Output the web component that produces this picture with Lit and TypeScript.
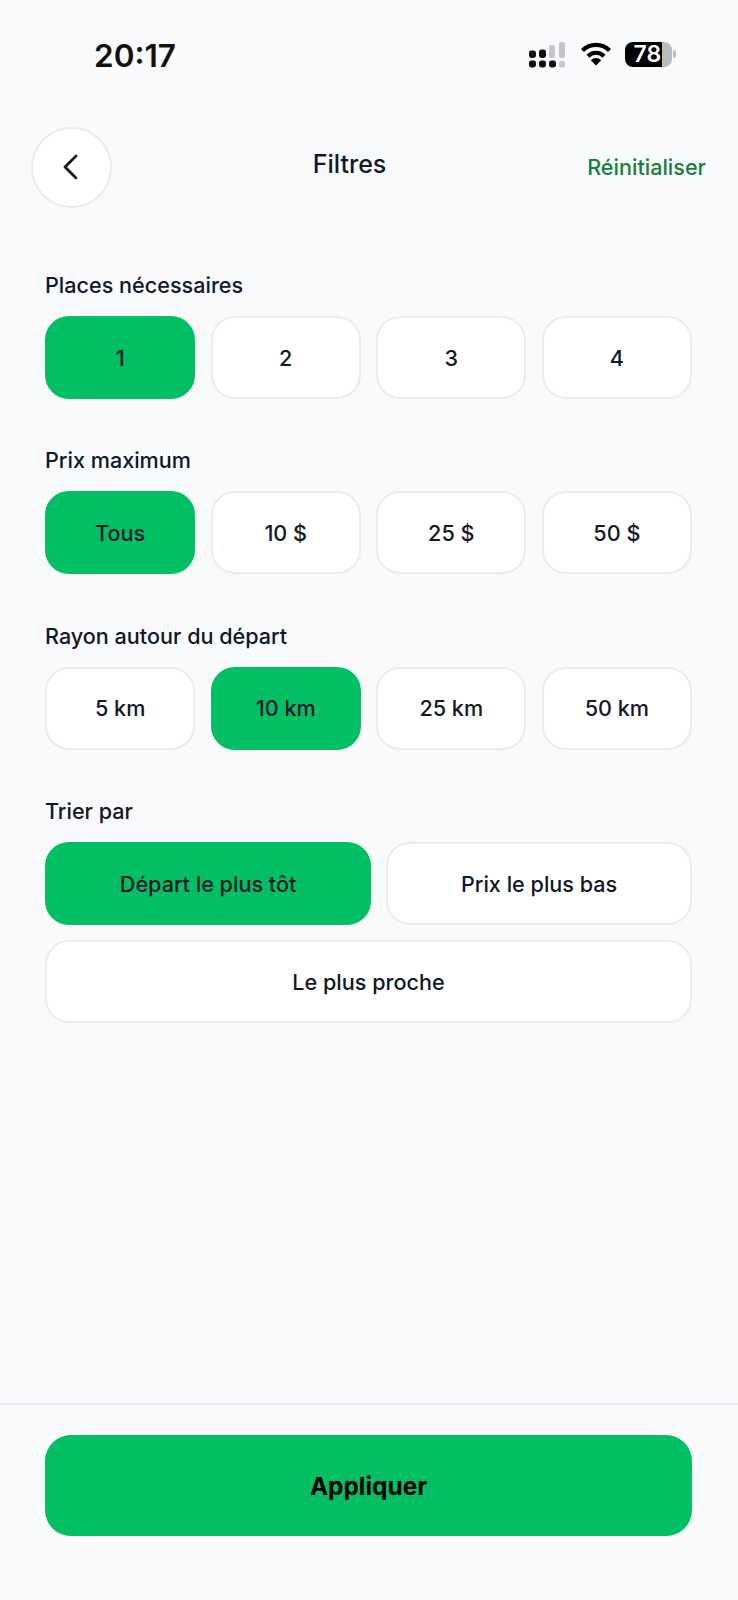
import { LitElement, html, css } from 'lit';
import { customElement, state } from 'lit/decorators.js';

const SEATS = ['1', '2', '3', '4'];
const PRICES = ['Tous', '10 $', '25 $', '50 $'];
const RADII = ['5 km', '10 km', '25 km', '50 km'];
const SORTS = ['Départ le plus tôt', 'Prix le plus bas', 'Le plus proche'];

@customElement('app-root')
class AppRoot extends LitElement {
  @state() seats = '1';
  @state() price = 'Tous';
  @state() radius = '10 km';
  @state() sort = 'Départ le plus tôt';

  reset() {
    this.seats = '1';
    this.price = 'Tous';
    this.radius = '10 km';
    this.sort = 'Départ le plus tôt';
  }

  optionButtons(options: string[], current: string, pick: (o: string) => void, cls: string) {
    return html`
      <div class=${cls}>
        ${options.map(
          (o) => html`<button class="opt ${o === current ? 'on' : ''}" @click=${() => pick(o)}>${o}</button>`
        )}
      </div>
    `;
  }

  render() {
    return html`
      <div class="status">
        <span class="time">20:17</span>
        <div class="status-icons">
          <svg class="signal" width="38" height="26" viewBox="0 0 38 26">
            <rect x="0" y="8.5" width="7" height="7.5" rx="2.4" fill="#111"></rect>
            <rect x="10" y="7.5" width="7" height="8.5" rx="2.4" fill="#111"></rect>
            <rect x="20" y="3" width="6" height="13" rx="2" fill="#c4c6c9"></rect>
            <rect x="30" y="0" width="6" height="16" rx="2" fill="#c4c6c9"></rect>
            <rect x="0" y="18.5" width="7" height="7" rx="2.4" fill="#111"></rect>
            <rect x="10" y="18.5" width="7" height="7" rx="2.4" fill="#111"></rect>
            <rect x="20" y="18.5" width="7" height="7" rx="2.4" fill="#111"></rect>
            <rect x="30" y="19" width="6" height="6.5" rx="2" fill="#c4c6c9"></rect>
          </svg>
          <svg class="wifi" width="32" height="24" viewBox="0 0 32 24">
            <path d="M2.5 8.5A19 19 0 0 1 29.5 8.5" fill="none" stroke="#000" stroke-width="4.2"></path>
            <path d="M8 14.2A11 11 0 0 1 24 14.2" fill="none" stroke="#000" stroke-width="4.2"></path>
            <path d="M16 23.5L10.8 18.2A7.5 7.5 0 0 1 21.2 18.2Z" fill="#000"></path>
          </svg>
          <div class="battery"><span>78</span></div>
          <div class="nub"></div>
        </div>
      </div>

      <header>
        <button class="back" aria-label="Retour">
          <svg width="22" height="28" viewBox="0 0 22 28">
            <path d="M16 3L5 14L16 25" fill="none" stroke="#111827" stroke-width="2.8" stroke-linecap="round" stroke-linejoin="round"></path>
          </svg>
        </button>
        <h1>Filtres</h1>
        <button class="reset" @click=${this.reset}>Réinitialiser</button>
      </header>

      <main>
        <section>
          <h2>Places nécessaires</h2>
          ${this.optionButtons(SEATS, this.seats, (o) => (this.seats = o), 'grid')}
        </section>
        <section>
          <h2>Prix maximum</h2>
          ${this.optionButtons(PRICES, this.price, (o) => (this.price = o), 'grid')}
        </section>
        <section>
          <h2>Rayon autour du départ</h2>
          ${this.optionButtons(RADII, this.radius, (o) => (this.radius = o), 'grid')}
        </section>
        <section>
          <h2>Trier par</h2>
          ${this.optionButtons(SORTS, this.sort, (o) => (this.sort = o), 'wrap')}
        </section>
      </main>

      <footer>
        <button class="apply">Appliquer</button>
      </footer>
    `;
  }

  static styles = css`
    :host {
      display: flex;
      flex-direction: column;
      height: 1600px;
      background: #f8fafc;
      color: #111827;
      font-family: Inter, 'Liberation Sans', sans-serif;
    }
    * {
      box-sizing: border-box;
    }
    button {
      font-family: inherit;
      color: inherit;
      cursor: pointer;
    }
    .status {
      height: 126.5px;
      padding: 35px 62px 0 94px;
      display: flex;
      justify-content: space-between;
      align-items: flex-start;
    }
    .time {
      font-size: 31.5px;
      line-height: 42px;
      font-weight: 600;
      color: #111;
    }
    .status-icons {
      display: flex;
      align-items: flex-start;
      margin-top: 7px;
    }
    .signal {
      margin-right: 13px;
    }
    .wifi {
      margin-right: 13px;
    }
    .battery {
      width: 47px;
      height: 25px;
      border-radius: 8px;
      background: linear-gradient(90deg, #000 78%, #b9bbbd 78%);
      color: #fff;
      font-size: 23px;
      font-weight: 600;
      line-height: 25px;
      padding-left: 8.5px;
    }
    .nub {
      width: 3px;
      height: 8px;
      margin: 8px 0 0 1px;
      border-radius: 0 3px 3px 0;
      background: #b9bbbd;
    }
    header {
      display: flex;
      align-items: center;
      justify-content: space-between;
      padding: 0 32px 0 31px;
    }
    .back {
      width: 81px;
      height: 81px;
      border-radius: 50%;
      border: 2px solid #ebecee;
      background: #fff;
      padding: 0 1px 0 0;
      display: flex;
      align-items: center;
      justify-content: center;
    }
    h1 {
      margin: 0 0 6px;
      font-size: 25px;
      line-height: 30px;
      font-weight: 500;
    }
    .reset {
      border: 0;
      background: none;
      padding: 0;
      font-size: 21.6px;
      line-height: 30px;
      font-weight: 500;
      color: #15803d;
    }
    main {
      padding: 62.5px 46px 0 45px;
      display: flex;
      flex-direction: column;
      gap: 46.4px;
    }
    h2 {
      margin: 0 0 16px;
      font-size: 21.6px;
      line-height: 30px;
      font-weight: 500;
    }
    .grid {
      display: grid;
      grid-template-columns: repeat(4, 1fr);
      gap: 15.3px;
    }
    .wrap {
      display: flex;
      flex-wrap: wrap;
      gap: 15px;
    }
    .wrap .opt {
      flex: 1 1 auto;
      padding: 0 44px;
    }
    .opt {
      height: 83px;
      border-radius: 24px;
      border: 2px solid #ebecee;
      background: #fff;
      font-size: 21.6px;
      font-weight: 500;
      padding: 0;
    }
    .opt.on {
      background: #02bf63;
      border-color: #02bf63;
    }
    footer {
      margin-top: auto;
      height: 197px;
      border-top: 2px solid #e7e8eb;
      padding: 30px 46px 0 45px;
    }
    .apply {
      width: 100%;
      height: 101px;
      border: 0;
      border-radius: 26px;
      background: #02bf63;
      color: #000;
      font-size: 24.4px;
      font-weight: 700;
    }
  `;
}
